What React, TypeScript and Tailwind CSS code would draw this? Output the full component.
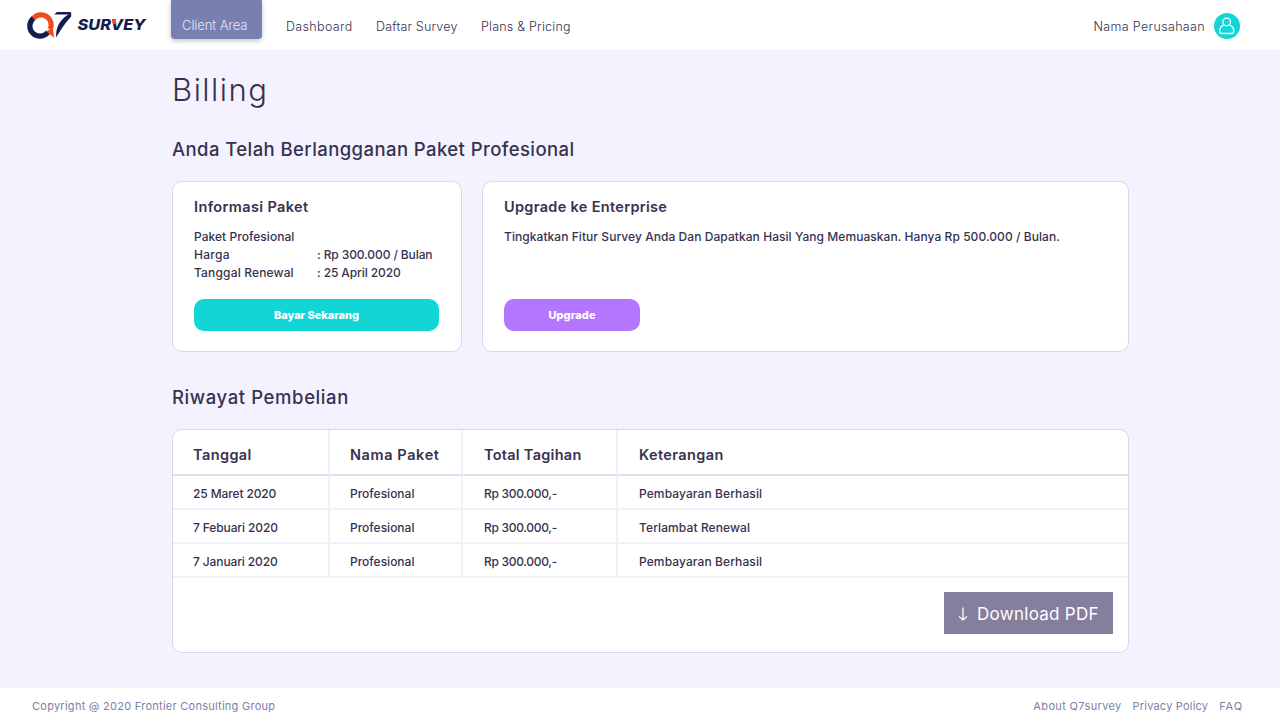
import type { ReactNode } from "react";

const columns = [
  { label: "Tanggal", spacing: "tracking-[0.4px]" },
  { label: "Nama Paket", spacing: "tracking-[0.6px]" },
  { label: "Total Tagihan", spacing: "tracking-[0.27px]" },
  { label: "Keterangan", spacing: "tracking-[0.4px]" },
];

const purchases = [
  ["25 Maret 2020", "Profesional", "Rp 300.000,-", "Pembayaran Berhasil"],
  ["7 Febuari 2020", "Profesional", "Rp 300.000,-", "Terlambat Renewal"],
  ["7 Januari 2020", "Profesional", "Rp 300.000,-", "Pembayaran Berhasil"],
];

const cellPadding = ["pl-5", "pl-5", "pl-[21px]", "pl-[21px]"];
const cellSpacing = ["tracking-[-0.12px]", "", "tracking-[-0.3px]", "tracking-[0.1px]"];

function Logo() {
  return (
    <svg className="mt-2.5 ml-[26px] h-[30px] w-[124px] shrink-0" viewBox="26 10 124 30" aria-label="Q7 Survey">
      <path d="M33.6 18 A10.2 10.2 0 1 0 47.9 32.4" fill="none" stroke="#151b4f" strokeWidth="5.2" />
      <path d="M33.4 18.2 A10.2 10.2 0 0 1 50.2 29.4" fill="none" stroke="#f04a1d" strokeWidth="5.2" />
      <path d="M46.2 31 L52.7 28 L54.3 37.8 L50.8 35Z" fill="#f04a1d" />
      <path d="M57 12 H71.2 L69.6 14.6 H54.2Z" fill="#151b4f" />
      <path d="M71.2 12.8 V16.4 C66.5 21.5 62 27.5 56.2 37.4 C55.3 27 60.5 18.6 71.2 12.8Z" fill="#151b4f" />
      <text x="77.5" y="30.3" fontFamily="Inter" fontSize="15" fontWeight="800" fontStyle="italic" textLength="68" lengthAdjust="spacingAndGlyphs" fill="#151b4f">SURVEY</text>
      <path d="M112 19.3 H115.9 L116.2 23.8 L112.8 24.2Z" fill="#f04a1d" />
    </svg>
  );
}

function Card({ className, children }: { className: string; children: ReactNode }) {
  return <section className={`rounded-[10px] border border-[#dad7e8] bg-white ${className}`}>{children}</section>;
}

export default function App() {
  return (
    <div className="flex h-[727px] flex-col overflow-hidden bg-[#f4f2fe] font-['Inter','Liberation_Sans',sans-serif] text-[#373250]">
      <header className="flex h-[50px] shrink-0 items-start bg-white text-[12.5px] leading-5 font-light whitespace-nowrap">
        <Logo />
        <a className="ml-[21px] h-[39px] w-[91px] rounded-b bg-[#7880b1] pt-[15px] pl-[11px] text-[13px] tracking-[-0.08px] text-[#e5e5f5] shadow-[0_2px_5px_rgba(60,60,100,0.3)]">Client Area</a>
        <nav className="flex pt-[17px] pl-6">
          <a className="w-[90px] tracking-[0.35px]">Dashboard</a>
          <a className="w-[105px] tracking-[0.18px]">Daftar Survey</a>
          <a className="tracking-[0.22px]">Plans &amp; Pricing</a>
        </nav>
        <div className="ml-auto flex pr-10">
          <span className="pt-[17px] pr-[9px] tracking-[0.35px]">Nama Perusahaan</span>
          <svg className="mt-[13px] size-[26px]" viewBox="0 0 26 26">
            <circle cx="13" cy="13" r="13" fill="#12d5d6" />
            <circle cx="12.7" cy="8.9" r="3.8" fill="none" stroke="white" strokeWidth="1.3" />
            <path d="M9.9 11.8 C7 13.1 5.6 15.4 5.6 18.2 C5.6 19.8 6.5 20.5 8 20.5 H17.4 C18.9 20.5 19.8 19.8 19.8 18.2 C19.8 15.4 18.4 13.1 15.5 11.8" fill="none" stroke="white" strokeWidth="1.3" />
          </svg>
        </div>
      </header>

      <main className="ml-[172px] w-[957px] flex-1">
        <h1 className="mt-5 h-10 text-[31px] leading-[40px] font-light tracking-[1.5px]">Billing</h1>
        <h2 className="mt-[27px] h-6 text-[18.5px] leading-[24px] font-medium tracking-[0.42px]">Anda Telah Berlangganan Paket Profesional</h2>

        <div className="mt-5 flex h-[171px] gap-5">
          <Card className="w-[290px] px-[21px] pt-[15px]">
            <h3 className="text-[14.5px] leading-5 font-semibold tracking-[0.38px]">Informasi Paket</h3>
            <div className="mt-[11px] grid grid-cols-[123px_1fr] text-xs leading-[18px] font-medium whitespace-nowrap">
              <span className="col-span-2 tracking-[0.04px]">Paket Profesional</span>
              <span className="tracking-[0.3px]">Harga</span>
              <span className="tracking-[-0.1px]">: Rp 300.000 / Bulan</span>
              <span className="tracking-[0.16px]">Tanggal Renewal</span>
              <span className="tracking-[-0.1px]">: 25 April 2020</span>
            </div>
            <button className="mt-[17px] block h-8 w-[245px] rounded-[10px] bg-[#12d5d6] text-[11px] font-extrabold tracking-[-0.05px] text-white">Bayar Sekarang</button>
          </Card>
          <Card className="w-[647px] px-[21px] pt-[15px]">
            <h3 className="text-[14.5px] leading-5 font-semibold tracking-[0.32px]">Upgrade ke Enterprise</h3>
            <p className="mt-[11px] h-[54px] text-xs leading-[18px] font-medium tracking-[0.06px] whitespace-nowrap">Tingkatkan Fitur Survey Anda Dan Dapatkan Hasil Yang Memuaskan. Hanya Rp 500.000 / Bulan.</p>
            <button className="mt-[17px] block h-8 w-[136px] rounded-[10px] bg-[#b476ff] text-[11px] font-extrabold tracking-[0.1px] text-white">Upgrade</button>
          </Card>
        </div>

        <h2 className="mt-[34px] h-6 text-[18.5px] leading-[23px] font-medium tracking-[0.6px]">Riwayat Pembelian</h2>
        <Card className="mt-[19px] h-[224px]">
          <table className="w-full table-fixed border-separate border-spacing-0 text-left">
            <colgroup>
              <col className="w-[157px]" />
              <col className="w-[133px]" />
              <col className="w-[155px]" />
              <col />
            </colgroup>
            <thead>
              <tr className="h-[46px]">
                {columns.map((column, i) => (
                  <th key={column.label} className={`border-b-2 border-[#e1deee] p-0 pt-1.5 text-[14.5px] leading-5 font-semibold ${i < 3 ? "border-r-2 border-r-[#f2f0f8]" : ""} ${column.spacing} ${cellPadding[i]}`}>{column.label}</th>
                ))}
              </tr>
            </thead>
            <tbody>
              {purchases.map((row) => (
                <tr key={row[0]} className="h-[34px]">
                  {row.map((cell, i) => (
                    <td key={i} className={`border-b-2 border-[#f2f0f8] p-0 pt-1 text-xs leading-[18px] font-medium ${i < 3 ? "border-r-2" : ""} ${cellSpacing[i]} ${cellPadding[i]}`}>{cell}</td>
                  ))}
                </tr>
              ))}
            </tbody>
          </table>
          <button className="mt-[14px] mr-[15px] ml-auto flex h-[42px] w-[169px] items-center bg-[#867e9d] pt-px pl-[14px] text-[17px] leading-6 tracking-[0.28px] whitespace-nowrap text-white">
            <svg className="mr-[9px] h-[14px] w-[10px]" viewBox="0 0 10 14" fill="none" stroke="white" strokeWidth="1.3"><path d="M5 0.5V13M1 9.5L5 13L9 9.5" /></svg>
            Download PDF
          </button>
        </Card>
      </main>

      <footer className="flex h-10 shrink-0 items-center border-t border-[#f1eef8] bg-white pr-[37px] pb-0.5 pl-8 text-[11px] text-[#7b81a8]">
        <span className="tracking-[0.26px]">Copyright @ 2020 Frontier Consulting Group</span>
        <span className="ml-auto tracking-[0.35px]">About Q7survey</span>
        <span className="ml-[11px] tracking-[0.2px]">Privacy Policy</span>
        <span className="ml-[11px] tracking-[0.9px]">FAQ</span>
      </footer>
    </div>
  );
}
